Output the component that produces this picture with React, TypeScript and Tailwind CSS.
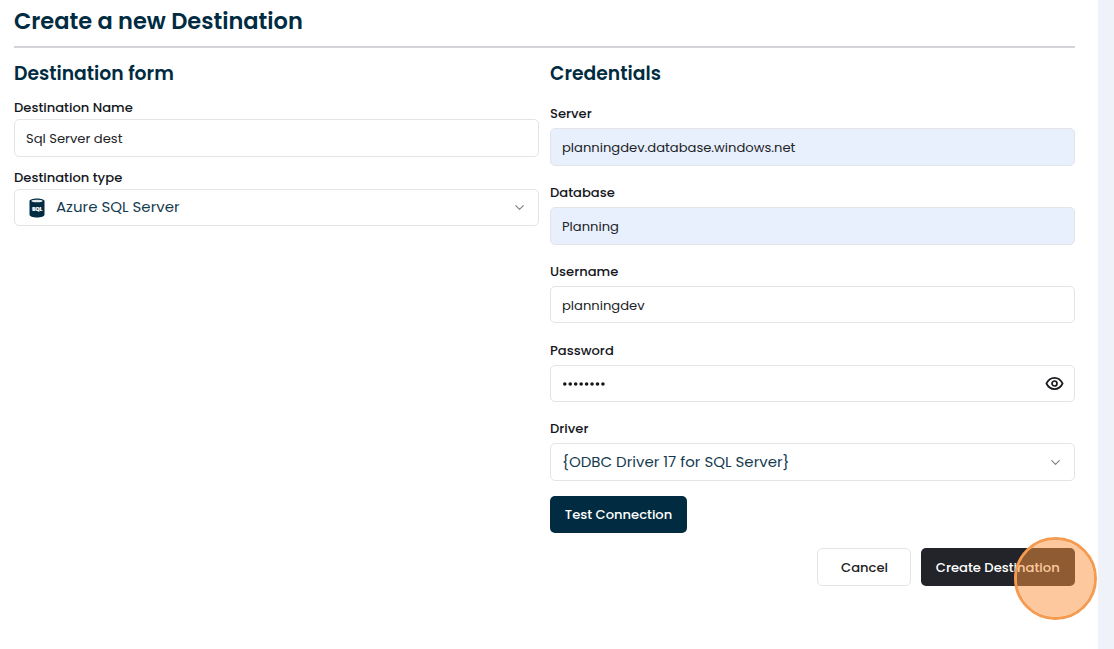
import type { ReactNode } from "react";
import { ChevronDown } from "lucide-react";

function Field({ label, labelClass, boxClass = "", children }: { label: string; labelClass: string; boxClass?: string; children: ReactNode }) {
  return (
    <div className="flex flex-col">
      <label className={`flex items-center text-[13.125px] leading-none font-medium whitespace-nowrap text-[#15171c] ${labelClass}`}>{label}</label>
      <div className={`flex h-[37.5px] items-center rounded-[5px] border border-[#e4e4e7] px-[11px] whitespace-nowrap ${boxClass}`}>{children}</div>
    </div>
  );
}

function Value({ children }: { children: ReactNode }) {
  return <span className="pt-[2px] text-[13.125px] text-[#222326]">{children}</span>;
}

function Chevron() {
  return <ChevronDown className="ml-auto size-[15px] text-[#85878b]" strokeWidth={2} />;
}

function DatabaseIcon() {
  return (
    <svg className="mt-px mr-[11px] ml-[3px] h-5 w-4" viewBox="0 0 16 20">
      <path d="M.5 3.3C.5 1.7 3.8.6 8 .6s7.500 1.100 7.500 2.700v13.400c0 1.600-3.300 2.700-7.500 2.700S.5 18.300.5 16.700Z" fill="#002b41" />
      <ellipse cx="8" cy="3" rx="5.700" ry="1.300" fill="#dfe7ec" />
      <text x="8" y="12.500" textAnchor="middle" fontSize="5.400" fontWeight="800" fill="#fff" stroke="#fff" strokeWidth=".2" fontFamily="Poppins, Inter, sans-serif">SQL</text>
    </svg>
  );
}

function EyeIcon() {
  return (
    <svg className="-mr-px ml-auto h-[19px] w-[19px]" viewBox="0 0 19 19" fill="none" stroke="#191b1f" strokeWidth="1.700">
      <path d="M1.400 9.500C3.200 5.900 6 3.900 9.500 3.900s6.300 2 8.100 5.600c-1.800 3.600-4.600 5.600-8.100 5.600S3.200 13.100 1.400 9.500Z" strokeLinejoin="round" />
      <circle cx="9.500" cy="9.500" r="2.500" />
    </svg>
  );
}

export default function App() {
  return (
    <div className="relative flex h-[649px] w-[1114px] overflow-hidden bg-[#eff3f9] font-['Poppins','Inter',sans-serif]">
      <main className="flex w-[1098px] flex-col bg-white pr-[23px] pl-[14px]">
        <h1 className="flex h-[46px] items-center pb-[3px] text-[22.5px] leading-none font-semibold text-[#002b41]">Create a new Destination</h1>
        <hr className="h-[2px] border-0 bg-[#d4d4d8]" />
        <div className="grid grid-cols-2 gap-[11px]">
          <section>
            <h2 className="flex h-[50px] items-center pt-[2px] text-[18.75px] leading-none font-semibold text-[#002b41]">Destination form</h2>
            <Field label="Destination Name" labelClass="h-[21px] pb-px">
              <Value>Sql Server dest</Value>
            </Field>
            <div className="h-[11px]" />
            <Field label="Destination type" labelClass="h-[21px]">
              <DatabaseIcon />
              <span className="text-[15px] text-[#153b4f]">Azure SQL Server</span>
              <Chevron />
            </Field>
          </section>
          <section>
            <h2 className="flex h-[50px] items-center pt-[2px] text-[18.75px] leading-none font-semibold text-[#002b41]">Credentials</h2>
            <div className="flex flex-col gap-[11.25px] pt-[0.25px]">
              <Field label="Server" labelClass="h-[30px] pt-px" boxClass="bg-[#e8f0fe]">
                <Value>planningdev.database.windows.net</Value>
              </Field>
              <Field label="Database" labelClass="h-[30px] pt-px" boxClass="bg-[#e8f0fe]">
                <Value>Planning</Value>
              </Field>
              <Field label="Username" labelClass="h-[30px] pt-[2px]">
                <Value>planningdev</Value>
              </Field>
              <Field label="Password" labelClass="h-[30px] pt-[2px]">
                <svg className="mt-px h-[6px] w-[46px]" viewBox="0 0 46 6" fill="#15171c" aria-label="Password value">
                  {Array.from({ length: 8 }, (_, i) => <circle key={i} cx={2.8 + i * 5.45} cy="3" r="1.8" />)}
                </svg>
                <EyeIcon />
              </Field>
              <Field label="Driver" labelClass="h-[30px] pt-px">
                <span className="text-[15px] text-[#153b4f]">{"{ODBC Driver 17 for SQL Server}"}</span>
                <Chevron />
              </Field>
            </div>
            <button className="mt-[15px] flex h-[37.5px] w-[137px] items-center justify-center rounded-[5px] bg-[#002b41] pt-px text-[13.125px] font-medium whitespace-nowrap text-white">Test Connection</button>
          </section>
        </div>
        <div className="mt-[15px] flex justify-end gap-[9.5px]">
          <button className="flex h-[37.5px] w-[94px] items-center justify-center rounded-[5px] border border-[#e4e4e7] pt-[2px] pl-px text-[13.125px] font-medium text-[#222326]">Cancel</button>
          <button className="flex h-[37.5px] w-[154.5px] items-center justify-center rounded-[5px] bg-[#222429] pt-[2px] text-[13.125px] font-medium whitespace-nowrap text-white">Create Destination</button>
        </div>
      </main>
      <div className="absolute top-[536.5px] left-[1014px] size-[83px] rounded-full border-[3px] border-[#f59b50] bg-[#fb923c]/50 bg-clip-padding" />
    </div>
  );
}
